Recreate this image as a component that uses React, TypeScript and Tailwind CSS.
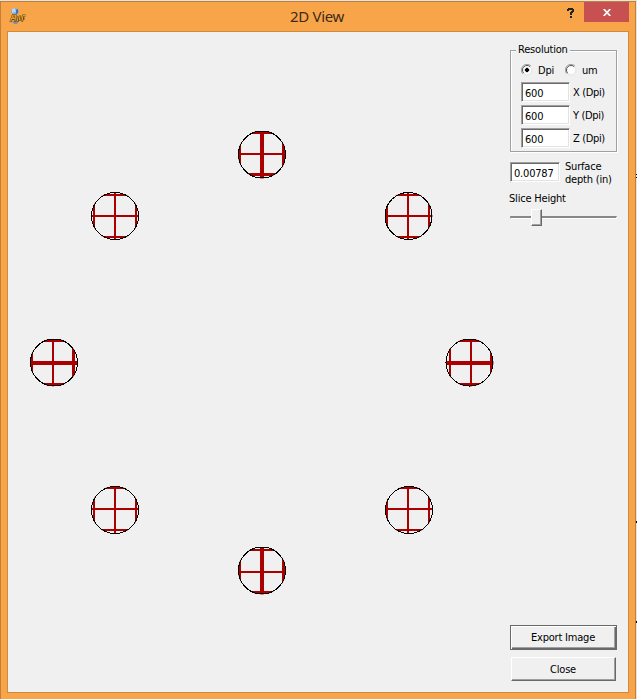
import React from "react";

type Hole = {
  cx: number;
  cy: number;
  v: [number, number];
  h: [number, number];
  top: [number, number];
  bottom: [number, number];
  left: [number, number];
  right: [number, number];
};

// Bars are given as [start, thickness] in canvas pixels.
const holes: Hole[] = [
  { cx: 262, cy: 154.5, v: [260, 4], h: [153, 2], top: [131, 3], bottom: [173, 3], left: [238, 3], right: [282, 3] },
  { cx: 115, cy: 216, v: [114, 2], h: [215, 2], top: [194, 2], bottom: [236, 2], left: [93, 2], right: [135, 2] },
  { cx: 408.5, cy: 216, v: [407, 2], h: [215, 2], top: [194, 2], bottom: [236, 2], left: [386, 2], right: [428, 2] },
  { cx: 54, cy: 362.5, v: [52, 2], h: [361, 4], top: [339, 3], bottom: [383, 3], left: [31, 2], right: [72, 3] },
  { cx: 469.5, cy: 362.5, v: [470, 2], h: [361, 4], top: [339, 3], bottom: [383, 3], left: [449, 2], right: [490, 2] },
  { cx: 115, cy: 510, v: [114, 2], h: [508, 2], top: [487, 2], bottom: [529, 2], left: [93, 2], right: [135, 2] },
  { cx: 409, cy: 510, v: [407, 2], h: [508, 2], top: [487, 2], bottom: [529, 2], left: [386, 2], right: [428, 2] },
  { cx: 262, cy: 570.5, v: [260, 4], h: [571, 2], top: [549, 2], bottom: [591, 3], left: [238, 3], right: [282, 3] },
];

function SliceCanvas() {
  return (
    <svg width="492" height="660" viewBox="8 32 492 660" shapeRendering="crispEdges" className="block shrink-0">
      {holes.map((o, i) => (
        <g key={i}>
          <clipPath id={`hole${i}`}>
            <circle cx={o.cx} cy={o.cy} r="24" />
          </clipPath>
          <g clipPath={`url(#hole${i})`} fill="#aa0000">
            {[o.v, o.left, o.right].map(([x, w], k) => (
              <rect key={k} x={x} y={o.cy - 24} width={w} height="48" />
            ))}
            {[o.h, o.top, o.bottom].map(([y, h], k) => (
              <rect key={k} x={o.cx - 24} y={y} width="48" height={h} />
            ))}
          </g>
          <circle cx={o.cx} cy={o.cy} r="23.5" fill="none" stroke="#000" strokeWidth="1" />
        </g>
      ))}
    </svg>
  );
}

function Field({ value, wide }: { value: string; wide?: boolean }) {
  return (
    <div
      className={`flex h-[20px] items-center border border-t-[#a0a0a0] border-l-[#a0a0a0] border-r-white border-b-white bg-white pl-[3px] pt-[2px] shadow-[inset_1px_1px_0_#696969,inset_-1px_-1px_0_#e3e3e3] ${wide ? "w-[50px]" : "w-[49px]"}`}
    >
      {value}
    </div>
  );
}

function Radio({ on }: { on?: boolean }) {
  return (
    <svg width="12" height="12" viewBox="0 0 12 12" className="block">
      <circle cx="6" cy="6" r="5" fill="#fff" />
      <path d="M2 10A5.5 5.5 0 0 1 10 2" fill="none" stroke="#a0a0a0" />
      <path d="M2.8 9.2A4.5 4.5 0 0 1 9.2 2.8" fill="none" stroke="#555" />
      <path d="M9.5 2.7A4.7 4.7 0 0 1 2.7 9.5" fill="none" stroke="#e3e3e3" />
      {on && <path d="M5 4h2v1h1v2H7v1H5V7H4V5h1z" fill="#000" stroke="#000" strokeWidth=".3" />}
    </svg>
  );
}

function AppIcon() {
  return (
    <svg width="17" height="17" viewBox="0 0 17 17" className="mt-[6px] ml-[8px] shrink-0">
      <path d="M3 1l3-1 3 1 1 3-2 3H4L2 4z" fill="#79a9df" />
      <path d="M3 1l3-1 1 4-4 1z" fill="#b4d7f3" />
      <path d="M7 2l2-1v4l-2 1z" fill="#446fa9" />
      <path d="M3 13h7l-2 3H5z" fill="#7392ba" />
      <g fill="none" strokeLinejoin="round">
        <path d="M1.5 14L4 7h2.5L6 14M3 11h3.5M8.5 13.5l.7-5.5M11 7.5L10.4 13M13 13.5L14 7.5h2.5M13.5 10.5h2" stroke="#5b3d14" strokeWidth="2.2" />
        <path d="M1.5 13.5L4 7h2.5L6 13.5M3 10.5h3.5M8.5 13l.7-5.5M11 7.5L10.4 12.500M13 13L14 7.500h2.500" stroke="#f0a22c" strokeWidth="1.1" />
      </g>
    </svg>
  );
}

function TitleBar() {
  return (
    <div className="flex h-[29px] items-start">
      <AppIcon />
      <h1 className="flex-1 pt-[2px] pl-[51px] text-center font-['Noto_Sans','Open_Sans',sans-serif] text-[15px] leading-6 font-normal tracking-[-0.3px] text-[#3d2a17]">
        2D View
      </h1>
      <div className="flex h-5 w-[27px] items-center justify-center pt-px">
        <svg width="8" height="10" viewBox="0 0 8 10" shapeRendering="crispEdges">
          <path d="M1 0h5v1h1v3H6v1H5v2H3V4h1V3h1V2H2v1H0V1h1zM3 8h2v2H3z" fill="#222" />
        </svg>
      </div>
      <div className="mr-[6px] flex h-5 w-[45px] items-center justify-center bg-[#c75050]">
        <svg width="8" height="7" viewBox="0 0 8 7" className="mt-px">
          <path d="M.7 0L7.3 7M7.3 0L.7 7" stroke="#fff" strokeWidth="1.7" />
        </svg>
      </div>
    </div>
  );
}

function Controls() {
  return (
    <aside className="flex w-[128px] flex-col pt-[12px] pl-[10px]">
      <fieldset className="h-[108px] w-[108px]">
        <div className="relative mt-[6px] h-[102px] w-[107px] border border-[#a0a0a0] shadow-[inset_1px_1px_0_#fff,1px_1px_0_#fff]">
          <span className="absolute -top-[8px] left-[5px] bg-[#f0f0f0] px-[2px] leading-[14px]">Resolution</span>
          <div className="flex h-[31px] items-center pt-[7px] pl-[10px]">
            <Radio on />
            <span className="ml-[5px] w-[27px]">Dpi</span>
            <Radio />
            <span className="ml-[5px]">um</span>
          </div>
          <div className="flex flex-col gap-[3px] pl-[10px]">
            {["X (Dpi)", "Y (Dpi)", "Z (Dpi)"].map((l) => (
              <div key={l} className="flex items-center gap-[3px] whitespace-nowrap">
                <Field value="600" />
                <span className="tracking-[-0.35px]">{l}</span>
              </div>
            ))}
          </div>
        </div>
      </fieldset>
      <div className="mt-[7px] flex h-[28px] items-center">
        <div className="-mt-[2px]">
          <Field value="0.00787" wide />
        </div>
        <span className="ml-[5px] leading-[13px]">
          Surface
          <br />
          depth (in)
        </span>
      </div>
      <div className="mt-[5px] -ml-px h-[14px] leading-[14px]">Slice Height</div>
      <div className="mt-[3px] flex h-[17px] w-[107px] items-center">
        <span className="h-[3px] w-[21px] border-t-2 border-b border-l border-t-[#888] border-b-white border-l-[#a0a0a0]" />
        <span className="h-[17px] w-[11px] border border-white border-r-[#696969] border-b-[#696969] bg-[#f0f0f0] shadow-[inset_-1px_-1px_0_#a0a0a0]" />
        <span className="h-[3px] flex-1 border-t-2 border-r border-b border-t-[#888] border-r-white border-b-white" />
      </div>
      <div className="mt-auto mb-[11px] flex flex-col gap-[7px]">
        <button className="h-[25px] w-[107px] border border-[#696969] pr-px shadow-[inset_1px_1px_0_#fff,inset_-1px_-1px_0_#696969,inset_-2px_-2px_0_#a0a0a0]">
          Export Image
        </button>
        <button className="ml-px h-[24px] w-[105px] border border-white border-r-[#696969] border-b-[#696969] pr-px shadow-[inset_-1px_-1px_0_#a0a0a0]">
          Close
        </button>
      </div>
    </aside>
  );
}

export default function App() {
  return (
    <div className="flex h-[699px] w-[637px] overflow-hidden bg-[#e4e4e4] pt-px font-['DejaVu_Sans_Condensed','DejaVu_Sans',sans-serif] text-[11px] leading-[13px] tracking-[-0.2px] text-black">
      <main className="flex w-[636px] flex-col border-x border-t border-[#c27f38] bg-[#f8a54a]">
        <TitleBar />
        <div className="ml-[6px] flex h-[662px] w-[622px] border border-[#d08a3e] bg-[#f0f0f0]">
          <SliceCanvas />
          <Controls />
        </div>
      </main>
      <div className="relative w-px">
        <i className="absolute top-[173px] h-px w-px bg-black" />
        <i className="absolute top-[176px] h-px w-px bg-black" />
        <i className="absolute top-[520px] h-[2px] w-px bg-black" />
        <i className="absolute top-[620px] h-[2px] w-px bg-black" />
      </div>
    </div>
  );
}
